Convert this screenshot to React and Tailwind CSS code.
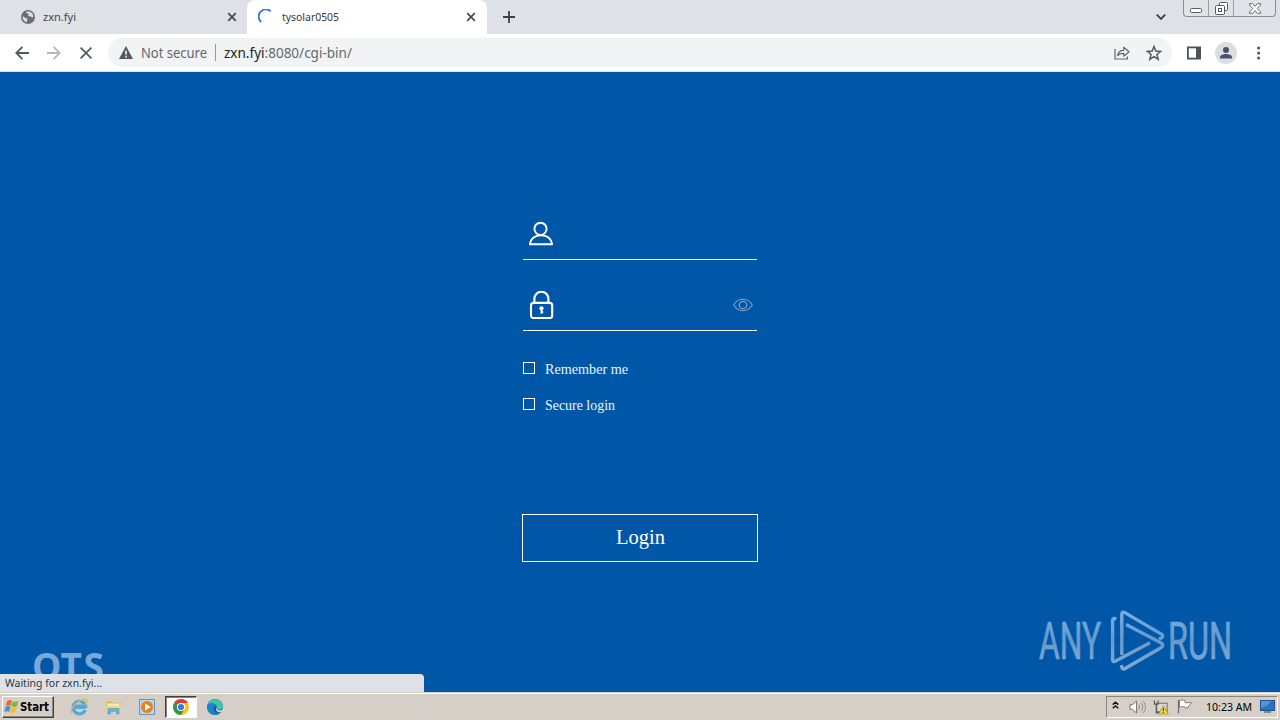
import React from "react";

const UI_FONT = "font-['DejaVu_Sans_Condensed','DejaVu_Sans',sans-serif]";

const CloseIcon = ({ className }) => (
  <svg viewBox="0 0 10 10" className={className}>
    <path d="M1.2 1.2l7.6 7.6M8.8 1.2L1.2 8.8" stroke="currentColor" strokeWidth="1.7" fill="none" />
  </svg>
);

// fits a line of text into the given width
const Label = ({ width, height = 18, size, baseline = 13, fill = "#000", weight = 400, family = "Noto Sans, sans-serif", children }) => (
  <svg width={width + 2} height={height} className="block shrink-0 overflow-visible">
    <text
      x="0"
      y={baseline}
      fontSize={size}
      fontFamily={family}
      fontWeight={weight}
      fill={fill}
      textLength={width}
      lengthAdjust="spacingAndGlyphs"
    >
      {children}
    </text>
  </svg>
);

const TabStrip = () => (
  <div className="flex h-[34px] bg-[#dee1e6]">
    <div className="flex h-full w-[247px] items-center pl-[21px] pr-[10px]">
      <svg viewBox="0 0 14 14" className="size-[14px]">
        <circle cx="7" cy="7" r="7" fill="#6b6f73" />
        <path d="M1.6 6.2c1.8.6 2.1 1.8 3.7 2 1.3.2 1.6.9.8 1.8-.5.7.3 1.2-.3 2.2A5.4 5.4 0 011.6 6.2zM5 2c.3 1.7 1.8 1 2.6 1.7.7.8-.8 1.2-.4 2.1.4 1 2.2.1 2.9.9.5.7 1.3.6 2.2.2A5.4 5.4 0 008.5 1.8C7.4 1.5 6 1.5 5 2z" fill="#dfe2e5" />
      </svg>
      <div className="ml-[8px]">
        <Label width={33} size={11.5} fill="#41454a">zxn.fyi</Label>
      </div>
      <CloseIcon className="ml-auto size-[10px] text-[#45494e]" />
    </div>
    <div className="flex h-full w-[240px] items-center rounded-t-[8px] bg-white pl-[11px] pr-[11px]">
      <svg viewBox="0 0 16 16" className="size-[16px]">
        <path d="M3.1 13A7 7 0 0112.6 2.2" fill="none" stroke="#3d78ca" strokeWidth="1.9" />
      </svg>
      <div className="ml-[8px]">
        <Label width={57} size={11.5} fill="#35383c">tysolar0505</Label>
      </div>
      <CloseIcon className="ml-auto size-[10px] text-[#45494e]" />
    </div>
    <div className="flex h-full grow items-center bg-[#dee1e6] pl-[16px]">
      <svg viewBox="0 0 12 12" className="size-[12px]">
        <path d="M6 0v12M0 6h12" stroke="#3c4043" strokeWidth="1.8" />
      </svg>
      <svg viewBox="0 0 10 6" className="ml-auto h-[6px] w-[10px]">
        <path d="M.8.7L5 4.9 9.2.7" fill="none" stroke="#3c4043" strokeWidth="1.8" />
      </svg>
      <div className="ml-[17px] mr-[4px] flex h-[17px] w-[93px] self-start rounded-b-[4px] border border-t-0 border-[#898d94] bg-[#e1e3e8]">
        <div className="flex w-[25px] items-center justify-center border-r border-[#9a9da4]">
          <svg viewBox="0 0 12 5" className="mt-[5px] h-[5px] w-[12px]">
            <rect x=".5" y=".5" width="11" height="4" rx="1" fill="#fff" stroke="#5a5d63" />
          </svg>
        </div>
        <div className="flex w-[25px] items-center justify-center border-r border-[#9a9da4]">
          <svg viewBox="0 0 13 13" className="size-[13px]" fill="#fff" stroke="#55585e">
            <rect x="4.5" y=".5" width="8" height="8" rx="1" />
            <rect x=".5" y="3.5" width="9" height="9" rx="1" />
            <rect x="3.5" y="6.5" width="3" height="3" />
          </svg>
        </div>
        <div className="flex grow items-center justify-center">
          <svg viewBox="0 0 12 11" className="h-[11px] w-[12px]">
            <path d="M.5.7h3.2L6 3.3 8.3.7h3.2v1.4L8.3 5.5l3.2 3.4v1.4H8.3L6 7.7l-2.3 2.6H.5V8.9l3.2-3.4L.5 2.1z" fill="#fff" stroke="#5a5d63" strokeWidth=".9" />
          </svg>
        </div>
      </div>
    </div>
  </div>
);

const Toolbar = () => (
  <div className="flex h-[38px] items-center border-b border-[#dce4ed] bg-white pl-[15px]">
    <svg viewBox="0 0 14 14" className="size-[14px] text-[#55585c]">
      <path d="M7.4.8L1.3 7l6.1 6.2M1.3 7H14" fill="none" stroke="currentColor" strokeWidth="1.8" />
    </svg>
    <svg viewBox="0 0 14 14" className="ml-[18px] size-[14px] text-[#b5b7ba]">
      <path d="M6.6.8L12.7 7l-6.1 6.2M12.7 7H0" fill="none" stroke="currentColor" strokeWidth="1.8" />
    </svg>
    <svg viewBox="0 0 12 12" className="ml-[19px] size-[12px]">
      <path d="M.6.6l10.8 10.8M11.4.6L.6 11.4" stroke="#55585c" strokeWidth="1.7" />
    </svg>
    <div className="ml-[16px] flex h-[29px] w-[1064px] items-center rounded-full bg-[#f1f3f4] pl-[11px] pr-[10px]">
      <svg viewBox="0 0 14 13" className="h-[13px] w-[14px]">
        <path d="M7 0l7 13H0z" fill="#55585c" />
        <path d="M7 4.5v4M7 9.8v1.6" stroke="#fff" strokeWidth="1.5" />
      </svg>
      <div className="ml-[8px]">
        <Label width={66} size={14.5} baseline={14} fill="#62666b">Not secure</Label>
      </div>
      <div className="ml-[6px] h-[17px] w-px bg-[#94989d]" />
      <div className="ml-[8px]">
        <Label width={128} size={14.5} baseline={14} fill="#65696e">
          <tspan fill="#202124">zxn.fyi</tspan>:8080/cgi-bin/
        </Label>
      </div>
      <svg viewBox="0 0 16 14" className="ml-auto h-[14px] w-[16px]" fill="none" stroke="#62666a" strokeWidth="1.2">
        <path d="M1 3v10h12.4v-2.5" />
        <path d="M3.6 9.6c.5-3.7 2.8-5.3 6.2-5.3V1.2L15 5.8l-5.2 4.4V7.4c-2.8 0-4.7.5-6.2 2.2z" strokeLinejoin="round" />
      </svg>
      <svg viewBox="0 0 16 16" className="ml-[16px] size-[16px]">
        <path d="M8 1.5l1.8 4.6 4.9.3-3.8 3.1 1.3 4.8L8 11.6l-4.2 2.7 1.3-4.8-3.8-3.1 4.9-.3z" fill="none" stroke="#55585c" strokeWidth="1.5" />
      </svg>
    </div>
    <svg viewBox="0 0 14 14" className="ml-[15px] size-[14px]">
      <rect x=".9" y="1.4" width="12.2" height="11.2" fill="#fff" stroke="#505357" strokeWidth="1.8" />
      <path d="M9 1h4.5v12H9z" fill="#505357" />
    </svg>
    <svg viewBox="0 0 22 22" className="ml-[14px] size-[22px]">
      <circle cx="11" cy="11" r="11" fill="#dadde2" />
      <circle cx="11" cy="7.9" r="3" fill="#46536a" />
      <path d="M5 16.5v-1.2c0-2.2 3.5-3.3 6-3.3s6 1.1 6 3.3v1.2z" fill="#46536a" />
    </svg>
    <svg viewBox="0 0 4 14" className="ml-[20px] h-[14px] w-[4px]" fill="#505357">
      <circle cx="1.6" cy="2" r="1.5" />
      <circle cx="1.6" cy="7" r="1.5" />
      <circle cx="1.6" cy="12" r="1.5" />
    </svg>
  </div>
);

const CheckRow = ({ label, width }) => (
  <div className="flex h-[36px] items-center pl-px">
    <div className="mb-[2px] size-[12px] border border-white" />
    <div className="ml-[10px]">
      <Label width={width} size={14} baseline={14} fill="#e9f5ff" family="Liberation Serif, serif">{label}</Label>
    </div>
  </div>
);

const LoginForm = () => (
  <div className="flex w-[236px] flex-col pt-[140px]">
    <div className="mx-px flex h-[48px] items-start border-b border-white pl-[5px] pt-[8px]">
      <svg viewBox="0 0 26 26" className="size-[26px]" fill="none" stroke="#fff" strokeWidth="1.9">
        <circle cx="12.5" cy="8.8" r="6.1" />
        <path d="M1.9 24.2h22.2c-.5-5.3-4.7-9-11.1-9s-10.6 3.7-11.1 9z" strokeLinejoin="round" />
      </svg>
    </div>
    <div className="mx-px flex h-[71px] items-start border-b border-white pl-[6px] pr-[4px] pt-[31px]">
      <svg viewBox="0 0 25 28" className="h-[28px] w-[25px]" fill="none" stroke="#fff" strokeWidth="2.1">
        <path d="M5.4 11.5V7.7a7 7 0 0114 0v3.8" />
        <rect x="2" y="11.9" width="21.2" height="15.1" rx="2.6" />
        <circle cx="12.5" cy="17.3" r="2.1" fill="#fff" stroke="none" />
        <path d="M12.5 17v5.7M12.5 21h1.7" strokeWidth="1.9" />
      </svg>
      <svg viewBox="0 0 20 14" className="ml-auto mt-[7px] h-[14px] w-[20px]" fill="none" stroke="#7c9ebb" strokeWidth="1.1">
        <path d="M.7 7C3 3.1 6 1.3 10 1.3S17 3.1 19.3 7C17 10.9 14 12.7 10 12.7S3 10.9.7 7z" />
        <circle cx="10" cy="7" r="3.7" strokeWidth="1.3" />
      </svg>
    </div>
    <div className="mt-[20px]">
      <CheckRow label="Remember me" width={83} />
      <CheckRow label="Secure login" width={70} />
    </div>
    <button className="mt-[91px] flex h-[48px] w-full items-center justify-center border border-white pl-[2px]">
      <Label width={49} height={24} baseline={18} size={21} fill="#fff" family="Liberation Serif, serif">Login</Label>
    </button>
  </div>
);

const AnyRun = () => (
  <svg viewBox="0 0 196 64" className="absolute left-[1038px] top-[537px] h-[64px] w-[196px]">
    <defs>
      <linearGradient id="mark" gradientUnits="userSpaceOnUse" x1="0" y1="0" x2="0" y2="64">
        <stop offset="0" stopColor="#78afe4" />
        <stop offset=".5" stopColor="#6898ca" />
        <stop offset="1" stopColor="#86afd8" />
      </linearGradient>
    </defs>
    <g fill="url(#mark)" stroke="url(#mark)" strokeWidth=".7" fontFamily="Roboto, sans-serif" fontSize="52">
      <text x="1" y="50" textLength="62" lengthAdjust="spacingAndGlyphs">ANY</text>
      <text x="130" y="50" textLength="64" lengthAdjust="spacingAndGlyphs">RUN</text>
    </g>
    <g fill="none" stroke="url(#mark)" strokeWidth="3.4" strokeLinejoin="round">
      <path d="M83.8 46V5.2c0-1.9 1.3-2.6 3-1.6l36.6 21.5c1.9 1.1 1.8 3.2-.3 4.1l-2 .8L98 16.5" stroke="none" />
      <path d="M83.8 46V5.2c0-1.9 1.3-2.6 3-1.6l36.6 21.5c1.9 1.1 1.8 3.2-.3 4.1l-2.2.9" />
      <path d="M78.4 10.1l-1.8-.6c-1.3-.2-2 .7-2 2.2v38.9c0 1.9 1.3 2.5 3 1.5L112 33.8" />
      <path d="M83.4 56.2l.4 1.8c.3 1.8 1.6 2.5 3.3 1.5l36.2-21c2-1.2 2-3.2 0-4.4L88 15.4" />
    </g>
  </svg>
);

const Page = () => (
  <main className="relative flex h-[620px] justify-center overflow-hidden bg-[#0057a8]">
    <LoginForm />
    <AnyRun />
    <svg viewBox="0 0 80 40" className="absolute left-[32px] top-[580px] h-[40px] w-[80px]">
      <text x="0 28.5 51.5" y="28" fontFamily="Open Sans, sans-serif" fontWeight="700" fontSize="37" fill="#78a9d9">QTS</text>
    </svg>
    <div className="absolute bottom-0 left-0 flex h-[18px] w-[424px] items-center rounded-tr-[4px] bg-[#dee1e6] pl-[5px]">
      <Label width={97} size={11.5} fill="#30343a">Waiting for zxn.fyi...</Label>
    </div>
  </main>
);

const WindowsFlag = () => (
  <svg viewBox="0 0 16 15" className="h-[15px] w-[16px]">
    <path d="M3 2.2C4.8.8 6.4.8 8 1.8L6.7 7C5 6 3.4 6.1 1.7 7.2z" fill="#e66b2c" />
    <path d="M8.7 2.2c2 .9 3.8.8 5.8-.4l-1.4 5.1c-1.9 1.3-3.7 1.3-5.6.4z" fill="#79b843" />
    <path d="M1.5 8c1.8-1.2 3.4-1.2 5-.2l-1.4 5.1C3.5 12 2 12 .2 13z" fill="#4b91d6" />
    <path d="M7.3 8.1c1.9 1 3.6 1 5.6-.3l-1.4 5.1c-2 1.3-3.8 1.4-5.7.4z" fill="#f4bd31" />
  </svg>
);

const Taskbar = () => (
  <footer className="flex h-[28px] items-center border-t border-[#d4d0c8] bg-[#d5cfc7] shadow-[inset_0_1px_0_#fff]">
    <div className="ml-[2px] flex h-[22px] w-[52px] items-center border border-b-[#404040] border-l-white border-r-[#404040] border-t-white pl-px shadow-[inset_-1px_-1px_0_#8a867f]">
      <WindowsFlag />
      <Label width={29} size={11.5} weight={700} family="DejaVu Sans Condensed, sans-serif">Start</Label>
    </div>
    <svg viewBox="0 0 18 18" className="ml-[16px] size-[18px]">
      <path d="M15.2 12.2a6.3 6.3 0 11.4-4.1H5.2" fill="none" stroke="#4fa9de" strokeWidth="3.2" />
      <path d="M3.4 9.8h12.4" stroke="#4fa9de" strokeWidth="2.2" />
      <path d="M1.8 16.3C-1 13.8 3.8 6.4 9.5 3.1c3-1.8 6.7-2.9 7.4-.8.5 1.4-.8 3.1-2.4 4.8" fill="none" stroke="#e2b74f" strokeWidth="1.3" />
    </svg>
    <svg viewBox="0 0 17 16" className="ml-[17px] h-[16px] w-[17px]">
      <path d="M1 2.2h5l1 1.4h8.3V13H1z" fill="#ddbc58" />
      <path d="M2 4.5h12.4V12H2z" fill="#f5eab3" />
      <path d="M1 7h15v5.8H1z" fill="#efd683" />
      <path d="M3 15V9.5h11V15h-2.5v-2.7h-6V15z" fill="#68b3de" stroke="#3c8dbc" strokeWidth=".5" />
    </svg>
    <svg viewBox="0 0 16 16" className="ml-[17px] size-[16px]">
      <rect x=".5" y=".5" width="15" height="15" fill="#b3d5ef" stroke="#6699c2" />
      <circle cx="8" cy="8" r="6" fill="#ef7f13" />
      <path d="M6 4.4L11.8 8 6 11.6z" fill="#fff" />
    </svg>
    <div className="ml-[10px] flex h-[22px] w-[32px] items-center justify-center border border-b-white border-l-[#404040] border-r-white border-t-[#404040] bg-white shadow-[inset_1px_1px_0_#85817b]">
      <svg viewBox="0 0 16 16" className="size-[16px]">
        <circle cx="8" cy="8" r="8" fill="#fbc415" />
        <path d="M8 8L1.1 4A8 8 0 0114.9 4H8z" fill="#dc3d32" />
        <path d="M1.1 4A8 8 0 008 16l3.5-6L8 8z" fill="#29994a" />
        <circle cx="8" cy="8" r="4.1" fill="#fff" />
        <circle cx="8" cy="8" r="3.1" fill="#367be3" />
      </svg>
    </div>
    <svg viewBox="0 0 16 16" className="ml-[10px] size-[16px]">
      <circle cx="8" cy="8" r="8" fill="#1974b8" />
      <path d="M1 5C3-.2 10-1.3 14 3c3 3.5 2.1 7.4-1.4 7.5-2.4.1-3.6-.8-2.9-2C10 5.2 5.4 3.2 1 5z" fill="#42c7a2" />
      <path d="M.1 7.3C1.2 3.3 9 3.4 9.8 7.1 6.7 6 5 9.3 6.8 12c1 1.6 2.6 3 4.8 3.2C6 18-.5 13.7.1 7.3z" fill="#1685d3" />
      <path d="M9.8 8c-.9 1.5-.1 3.3 2 3.5 1.2.1 2.2-.1 3.1-.7h1.3L13 13.4C9 14.5 6.4 12 7.3 8.8c.5-1.4 1.7-1.8 2.5-.8z" fill="#11508b" />
      <path d="M9.8 8.2c-.7 1.6.2 2.8 2.4 3 1.6.1 2.8-.4 3.8-1.5v3.5h-1.2c-2.8.5-5-.3-5.8-2.3-.3-1 .1-2.2.8-2.7z" fill="#d5cfc7" />
    </svg>
    <div className="ml-auto mr-[2px] flex h-[22px] w-[172px] items-center border border-b-white border-l-[#8a867f] border-r-white border-t-[#8a867f] pl-[5px]">
      <svg viewBox="0 0 7 8" className="mb-[3px] h-[8px] w-[7px]">
        <path d="M.7 3.6l2.8-2.4 2.8 2.4M.7 7.3l2.8-2.4 2.8 2.4" fill="none" stroke="#111" strokeWidth="1.4" />
      </svg>
      <svg viewBox="0 0 17 14" className="ml-[10px] h-[14px] w-[17px]" fill="none" stroke="#74726f">
        <path d="M1 4.7h2.5L7.6 1v12L3.5 9.3H1z" fill="#fff" />
        <path d="M9.7 4.5c1.2 1.5 1.2 3.5 0 5M12 2.8c2.4 2.6 2.4 5.8 0 8.4M14.2 1.3c3 3.5 3 7.9 0 11.4" stroke="#928f8b" />
      </svg>
      <svg viewBox="0 0 17 16" className="ml-[7px] size-[16px]">
        <rect x="4" y="4" width="11" height="9" fill="#d7dbdd" stroke="#666" />
        <path d="M1.5 1v4h4V1M3.5 5v10M3.5 14h5" fill="none" stroke="#555" strokeWidth="1.2" />
        <path d="M11 6.3l5.3 9.2H5.7z" fill="#f4d329" stroke="#a18115" strokeWidth=".6" />
        <path d="M11 9v3.4M11 13.4v1" stroke="#333" strokeWidth="1.1" />
      </svg>
      <svg viewBox="0 0 16 15" className="ml-[8px] h-[15px] w-[16px]">
        <path d="M1.5 1v13.5" stroke="#6d6965" strokeWidth="1.2" />
        <path d="M2.5 1.5c2-.7 3.7-.7 5.6.3v1.9h6.7l-3 3-.8 2.2H8.2V8.2c-1.7-.8-3.8-.8-5.7 0z" fill="#fff" stroke="#817d79" />
      </svg>
      <div className="ml-[13px]">
        <Label width={46} size={11.5}>10:23 AM</Label>
      </div>
      <svg viewBox="0 0 15 13" className="ml-[6px] h-[13px] w-[15px]">
        <rect x=".5" y=".5" width="14" height="10" fill="#2f70bd" stroke="#25508a" />
        <path d="M1 8V1h10C9 5 5 7 1 8z" fill="#4f94dc" />
        <path d="M4 12h7" stroke="#596c83" strokeWidth="1.4" />
      </svg>
    </div>
  </footer>
);

const App = () => (
  <div className={`flex h-[720px] w-[1280px] flex-col overflow-hidden bg-white ${UI_FONT}`}>
    <TabStrip />
    <Toolbar />
    <Page />
    <Taskbar />
  </div>
);

export default App;
